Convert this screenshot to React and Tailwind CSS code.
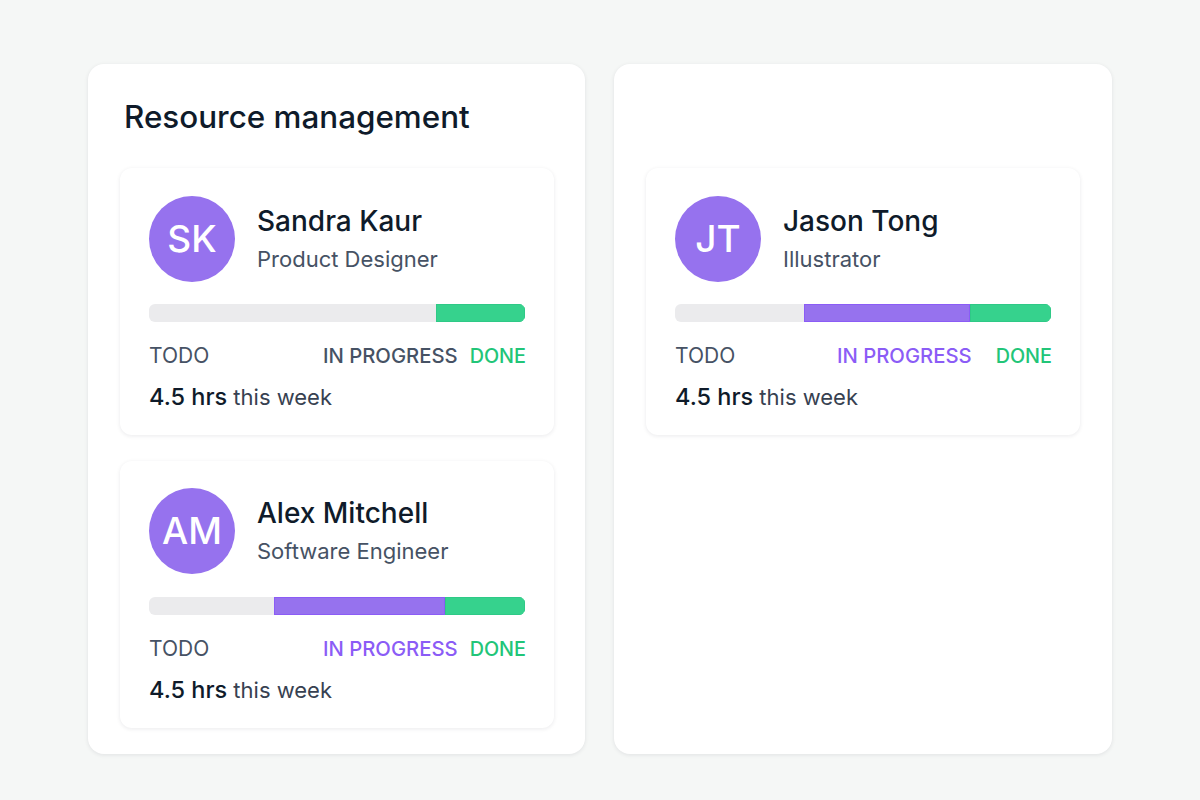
import React from 'react';

const PersonCard = ({ initials, name, role, todo, progress, done, active, top = 'pt-[28px]', gap = 'mt-[22px]' }) => (
  <div className={`h-[267px] rounded-xl bg-white px-[29px] shadow-[0_1px_4px_rgba(17,24,39,0.09)] ${top}`}>
    <div className="flex items-center">
      <div className="flex h-[86px] w-[86px] shrink-0 items-center justify-center rounded-full bg-[#9672ee] text-[37px] font-[450] text-white">
        {initials}
      </div>
      <div className="ml-[22px] -mt-[2px]">
        <div className="text-[28px] leading-[36px] font-medium text-[#0f1b2a]">{name}</div>
        <div className="mt-[5px] text-[22px] leading-[30px] text-[#465264]">{role}</div>
      </div>
    </div>
    <div className={`flex h-[18px] overflow-hidden rounded-md bg-[#ebebed] ${gap}`}>
      <div style={{ width: todo }} className="shrink-0" />
      {progress > 0 && <div style={{ width: progress }} className="shrink-0 border border-[#8b5cf6] bg-[#9672ee]" />}
      <div style={{ width: done }} className="shrink-0 border border-[#2fc987] bg-[#36d28d]" />
    </div>
    <div className="mt-[21px] -mr-[1px] flex items-baseline leading-[26px] text-[#465264]">
      <span className="text-[21px]">TODO</span>
      <span className={`ml-auto text-[20.3px] font-medium ${active ? 'text-[#8b5cf6]' : ''}`}>IN PROGRESS</span>
      <span className={`text-[19.8px] font-medium text-[#22c578] ${active === 'wide' ? 'ml-[24px]' : 'ml-[12px]'}`}>DONE</span>
    </div>
    <div className="mt-[13px] text-[22px] leading-[30px] text-[#374151]">
      <span className="text-[23.5px] font-medium text-[#0f1b2a]">4.5 hrs</span> this week
    </div>
  </div>
);

export default function App() {
  return (
    <div className="flex h-[800px] w-[1200px] gap-[29px] bg-[#f5f7f6] pt-[64px] pb-[46px] pl-[88px] font-['Inter',sans-serif]">
      <div className="w-[497px] rounded-2xl bg-white pl-[32px] pr-[31px] shadow-[0_1px_4px_rgba(17,24,39,0.09)]">
        <h1 className="mt-[32px] ml-[4px] text-[31.4px] leading-[42px] font-medium text-[#0f1b2a]">Resource management</h1>
        <div className="mt-[30px] flex flex-col gap-[26px]">
          <PersonCard initials="SK" name="Sandra Kaur" role="Product Designer" todo={287} progress={0} done={89} />
          <PersonCard initials="AM" name="Alex Mitchell" role="Software Engineer" todo={125} progress={171} done={80} active="narrow" top="pt-[27px]" gap="mt-[23px]" />
        </div>
      </div>
      <div className="w-[498px] rounded-2xl bg-white px-[32px] pt-[104px] shadow-[0_1px_4px_rgba(17,24,39,0.09)]">
        <PersonCard initials="JT" name="Jason Tong" role="Illustrator" todo={129} progress={166} done={81} active="wide" />
      </div>
    </div>
  );
}
